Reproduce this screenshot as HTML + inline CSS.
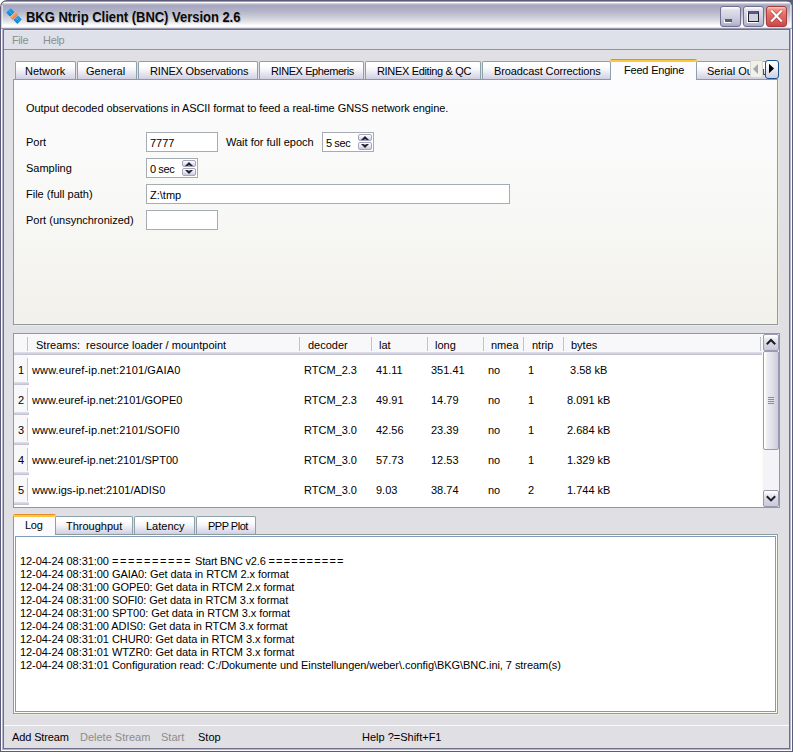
<!DOCTYPE html>
<html><head><meta charset="utf-8">
<style>
*{box-sizing:border-box;margin:0;padding:0}
html,body{width:793px;height:752px;overflow:hidden;background:#fff}
body{position:relative;font-family:"Liberation Sans",sans-serif;font-size:11px;color:#000}
.a{position:absolute}
.t{position:absolute;white-space:pre;line-height:13px;font-size:11px}
/* window frame */
#win{left:0;top:0;width:793px;height:752px;background:#5c5b79;border-radius:7px 7px 0 0}
#title{left:1px;top:1px;width:791px;height:28px;border-radius:6px 6px 0 0;
 background:linear-gradient(#9c9cb4 0,#9c9cb4 1px,#fcfcfd 1px,#fcfcfd 2px,#d2d2de 2px,#d2d2de 3px,#b6b6ca 3px,#b6b6ca 4px,#a6a6c2 4px,#a6a6c2 5px,#b2b2c6 9.5px,#c4c6d2 14.5px,#dcdde3 19.5px,#f0f0f3 22.5px,#fefefe 24px,#fefefe 26px,#e6e5e6 26px,#e6e5e6 27px,#9a9ab0 27px)}
#frL{left:1px;top:29px;width:791px;height:722px;background:#fafafd}
#frR{left:2px;top:29px;width:789px;height:721px;background:#b6b6cc}
#frB{left:3px;top:29px;width:787px;height:720px;background:#6e6d8a}
#frT{left:3px;top:29px;width:787px;height:1px;background:#6e6d8a}
#client{left:4px;top:30px;width:785px;height:718px;background:#e0dfe4}
#menubar{left:4px;top:30px;width:785px;height:19px;background:linear-gradient(#e6e8f0 0,#e6e8f0 1px,#dfe1ea 1px)}
#menuline{left:4px;top:49px;width:785px;height:1px;background:#9393a0}
.menu{color:#8e8e8e}
/* caption buttons */
.cb{position:absolute;top:6px;width:21px;height:21px;border-radius:3px;border:1px solid #6f7192;
 background:linear-gradient(#fdfdff 0,#f6f6fa 1px,#e0e0ea 3px,#d0d0e0 50%,#bdbdd3 85%,#a8a8c4)}
#close{border-color:#a83c3c;background:linear-gradient(#fbe0a8 0,#f4b4a0 1px,#ec8a80 3px,#e36a66 8px,#d85652 80%,#c84848)}
/* tabs */
.tab{position:absolute;top:61px;height:19px;border:1px solid #8ea0aa;border-bottom:none;border-radius:2px 2px 0 0;
 background:linear-gradient(#ffffff 0,#ffffff 4px,#f4f4fa 8px,#e4e4f0 12px,#d4d4e6 16px,#c8c8dc 18px)}
.seltab{position:absolute;background:#fcfcfe}
.seltab:before{content:"";position:absolute;left:-1px;right:-1px;top:0;height:3px;border-radius:2px 2px 0 0;
 background:linear-gradient(#e68b2c 0,#e68b2c 1px,#ffc73c 1px)}
.pane{position:absolute;border:1px solid #919b9c;box-shadow:1px 1px 0 #ecebdf}
#pane1{left:13px;top:79px;width:765px;height:246px;background:linear-gradient(#fcfcfe 0%,#f8f8f6 50%,#f2f1eb 100%)}
.inp{position:absolute;background:#fff;border:1px solid #a5acb2}
.spinbtn{position:absolute;width:14px;height:7px;border:1px solid #a6a6be;border-radius:2px;
 background:linear-gradient(#ffffff,#e4e4ee 60%,#c8c8dc)}
/* table */
#tbl{left:13px;top:333px;width:767px;height:175px;border:1px solid #7f9db9;background:#fff}
.hdr{position:absolute;background:#f8f8fb}
.hsep{position:absolute;width:1px;background:#c2c2d2}
.band{position:absolute;height:3px;background:linear-gradient(#e2e2ec,#d0d0de 50%,#bcbccc)}
.cell{position:absolute;white-space:pre;line-height:13px}
/* log */
#pane2{left:13px;top:534px;width:765px;height:180px;background:#fcfcfe}
#logedit{left:15px;top:536px;width:761px;height:176px;border:1px solid #7f9db9;background:#fff}
.log{position:absolute;left:20px;white-space:pre;line-height:13px;letter-spacing:-0.06px}
#tbsep{left:4px;top:725px;width:785px;height:1px;background:#fafafc}
.dis{color:#8c8c8c}
</style></head>
<body>
<div class="a" style="left:783px;top:0;width:10px;height:10px;background:#5e5d78"></div>
<div id="win" class="a"></div>
<div id="title" class="a"></div>
<div class="a" style="left:1px;top:5px;width:2px;height:23px;background:linear-gradient(90deg,rgba(200,200,220,0.7) 0,rgba(200,200,220,0.7) 1px,rgba(255,255,255,0.55) 1px)"></div>
<div class="a" style="left:790px;top:5px;width:2px;height:23px;background:linear-gradient(90deg,rgba(255,255,255,0.55) 0,rgba(255,255,255,0.55) 1px,rgba(200,200,220,0.7) 1px)"></div>
<div id="frL" class="a"></div>
<div id="frR" class="a"></div>
<div id="frB" class="a"></div>
<div id="frT" class="a"></div>
<div id="client" class="a"></div>
<div id="menubar" class="a"></div>
<div id="menuline" class="a"></div>

<!-- title icon -->
<svg class="a" style="left:4px;top:6px" width="20" height="20" viewBox="4 6 20 20">
 <defs>
  <linearGradient id="gb" x1="0" y1="0" x2="1" y2="1"><stop offset="0" stop-color="#2aa4f0"/><stop offset="1" stop-color="#0b7fd6"/></linearGradient>
  <linearGradient id="go" x1="0" y1="0" x2="1" y2="0"><stop offset="0" stop-color="#fbb070"/><stop offset="1" stop-color="#f07a38"/></linearGradient>
 </defs>
 <g transform="rotate(45 14 16)">
  <rect x="6" y="12.8" width="5.6" height="6.4" rx="0.6" fill="url(#gb)"/>
  <rect x="16.4" y="12.8" width="5.6" height="6.4" rx="0.6" fill="url(#gb)"/>
  <line x1="6.5" y1="16" x2="11.2" y2="16" stroke="#9cc8e0" stroke-width="0.6" stroke-dasharray="1 0.8"/>
  <line x1="16.8" y1="16" x2="21.5" y2="16" stroke="#9cc8e0" stroke-width="0.6" stroke-dasharray="1 0.8"/>
  <rect x="12" y="12.2" width="4" height="7.6" rx="0.4" fill="url(#go)"/>
  <line x1="14" y1="12.3" x2="14" y2="8.6" stroke="#f5a060" stroke-width="0.9"/>
 </g>
</svg>
<div class="t" style="left:26px;top:9px;font-size:14px;font-weight:bold;line-height:16px;transform:scaleX(0.925);transform-origin:0 0;color:#0a0a0a;text-shadow:1px 1px 0 rgba(120,120,140,0.35)">BKG Ntrip Client (BNC) Version 2.6</div>

<div class="cb" style="left:720px"><div class="a" style="left:4px;top:12px;width:7px;height:3px;background:#5c5b79;box-shadow:-1px 1px 0 #fff"></div></div>
<div class="cb" style="left:743px"><div class="a" style="left:4px;top:4px;width:11px;height:11px;border:1px solid #1e1e30;border-top:3px solid #58587e;background:#d0d0e0;box-shadow:-1px 1px 0 #fff"></div></div>
<div class="cb" id="close" style="left:766px">
 <svg class="a" style="left:0;top:0" width="19" height="19" viewBox="0 0 19 19"><path d="M4.2 3.6 L14.8 14.6 M14.8 3.6 L4.2 14.6" stroke="#6a2020" stroke-width="3.4" opacity="0.55"/><path d="M4.2 3.6 L14.8 14.6 M14.8 3.6 L4.2 14.6" stroke="#fff" stroke-width="2.2"/></svg>
</div>

<div class="t menu" style="left:12px;top:34px;letter-spacing:-0.4px">File</div>
<div class="t menu" style="left:43px;top:34px;letter-spacing:-0.3px">Help</div>

<!-- tabs top -->
<div class="tab" style="left:15px;width:61px"></div>
<div class="tab" style="left:77px;width:60px"></div>
<div class="tab" style="left:138px;width:120px"></div>
<div class="tab" style="left:259px;width:105px"></div>
<div class="tab" style="left:365px;width:116px"></div>
<div class="tab" style="left:482px;width:129px"></div>
<div class="tab" style="left:696px;width:80px"></div>
<div id="pane1" class="pane"></div>
<div class="seltab" style="left:611px;top:59px;width:85px;height:21px"></div>
<div class="t" style="left:25px;top:65px">Network</div>
<div class="t" style="left:86px;top:65px">General</div>
<div class="t" style="left:150px;top:65px;letter-spacing:-0.18px">RINEX Observations</div>
<div class="t" style="left:271px;top:65px;letter-spacing:-0.42px">RINEX Ephemeris</div>
<div class="t" style="left:377px;top:65px;letter-spacing:-0.34px">RINEX Editing &amp; QC</div>
<div class="t" style="left:494px;top:65px;letter-spacing:-0.1px">Broadcast Corrections</div>
<div class="t" style="left:624px;top:64px;letter-spacing:-0.2px">Feed Engine</div>
<div class="t" style="left:707px;top:65px">Serial Output</div>

<!-- scroll buttons -->
<div class="a" style="left:750px;top:60px;width:13px;height:18px;border:1px solid #d6d5ce;border-radius:2px;background:#f1f0ea"></div>
<svg class="a" style="left:750px;top:60px" width="13" height="18"><path d="M3 9 L8 4 L8 14 Z" fill="#a7a7a7"/></svg>
<div class="a" style="left:765px;top:60px;width:14px;height:19px;border:1px solid #1a5290;border-radius:3px;background:linear-gradient(#fff,#f2f2f8 40%,#cdcde0)"></div>
<svg class="a" style="left:765px;top:60px" width="14" height="19"><path d="M4 3.8 L9 8.5 L4 13.2 Z" fill="#000"/></svg>

<!-- form -->
<div class="t" style="left:26px;top:102px;letter-spacing:-0.06px">Output decoded observations in ASCII format to feed a real-time GNSS network engine.</div>
<div class="t" style="left:26px;top:136px">Port</div>
<div class="t" style="left:26px;top:162px">Sampling</div>
<div class="t" style="left:26px;top:188px">File (full path)</div>
<div class="t" style="left:26px;top:214px">Port (unsynchronized)</div>
<div class="inp" style="left:146px;top:132px;width:72px;height:20px"></div>
<div class="t" style="left:150px;top:137px">7777</div>
<div class="t" style="left:226px;top:136px">Wait for full epoch</div>
<div class="inp" style="left:322px;top:132px;width:52px;height:20px"></div>
<div class="t" style="left:326px;top:137px;letter-spacing:-0.4px">5 sec</div>
<div class="spinbtn" style="left:358px;top:134px"></div>
<div class="spinbtn" style="left:358px;top:142px;height:8px"></div>
<svg class="a" style="left:358px;top:134px" width="14" height="16"><path d="M3 6 L7 2 L11 6 L8.8 6 L7 5.2 L5.2 6 Z" fill="#202028"/><path d="M3 10 L7 14 L11 10 L8.8 10 L7 10.8 L5.2 10 Z" fill="#202028"/></svg>
<div class="inp" style="left:146px;top:158px;width:52px;height:20px"></div>
<div class="t" style="left:150px;top:163px;letter-spacing:-0.4px">0 sec</div>
<div class="spinbtn" style="left:182px;top:160px"></div>
<div class="spinbtn" style="left:182px;top:168px;height:8px"></div>
<svg class="a" style="left:182px;top:160px" width="14" height="16"><path d="M3 6 L7 2 L11 6 L8.8 6 L7 5.2 L5.2 6 Z" fill="#202028"/><path d="M3 10 L7 14 L11 10 L8.8 10 L7 10.8 L5.2 10 Z" fill="#202028"/></svg>
<div class="inp" style="left:146px;top:184px;width:364px;height:20px"></div>
<div class="t" style="left:150px;top:189px">Z:\tmp</div>
<div class="inp" style="left:146px;top:210px;width:72px;height:20px"></div>

<!-- table -->
<div id="tbl" class="a"></div>
<!-- table content -->
<div class="hdr" style="left:14px;top:334px;width:748px;height:18px"></div>
<div class="band" style="left:14px;top:352px;width:748px"></div>
<div class="hsep" style="left:27px;top:337px;height:14px"></div>
<div class="hsep" style="left:299px;top:337px;height:14px"></div>
<div class="hsep" style="left:371px;top:337px;height:14px"></div>
<div class="hsep" style="left:427px;top:337px;height:14px"></div>
<div class="hsep" style="left:483px;top:337px;height:14px"></div>
<div class="hsep" style="left:523px;top:337px;height:14px"></div>
<div class="hsep" style="left:563px;top:337px;height:14px"></div>
<div class="hsep" style="left:760px;top:337px;height:14px"></div>
<div class="cell" style="left:36px;top:339px">Streams:  resource loader / mountpoint</div>
<div class="cell" style="left:308px;top:339px">decoder</div>
<div class="cell" style="left:379px;top:339px">lat</div>
<div class="cell" style="left:435px;top:339px">long</div>
<div class="cell" style="left:491px;top:339px">nmea</div>
<div class="cell" style="left:532px;top:339px">ntrip</div>
<div class="cell" style="left:571px;top:339px">bytes</div>
<div class="hdr" style="left:14px;top:355px;width:14px;height:27px"></div>
<div class="band" style="left:14px;top:382px;width:15px"></div>
<div class="hsep" style="left:27px;top:358px;height:23px"></div>
<div class="cell" style="left:18px;top:364px">1</div>
<div class="cell" style="left:32px;top:364px;letter-spacing:0.13px">www.euref-ip.net:2101/GAIA0</div>
<div class="cell" style="left:304px;top:364px">RTCM_2.3</div>
<div class="cell" style="left:376px;top:364px">41.11</div>
<div class="cell" style="left:431px;top:364px">351.41</div>
<div class="cell" style="left:488px;top:364px">no</div>
<div class="cell" style="left:528px;top:364px">1</div>
<div class="cell" style="left:567px;top:364px"> 3.58 kB</div>
<div class="hdr" style="left:14px;top:385px;width:14px;height:27px"></div>
<div class="band" style="left:14px;top:412px;width:15px"></div>
<div class="hsep" style="left:27px;top:388px;height:23px"></div>
<div class="cell" style="left:18px;top:394px">2</div>
<div class="cell" style="left:32px;top:394px">www.euref-ip.net:2101/GOPE0</div>
<div class="cell" style="left:304px;top:394px">RTCM_2.3</div>
<div class="cell" style="left:376px;top:394px">49.91</div>
<div class="cell" style="left:431px;top:394px">14.79</div>
<div class="cell" style="left:488px;top:394px">no</div>
<div class="cell" style="left:528px;top:394px">1</div>
<div class="cell" style="left:567px;top:394px">8.091 kB</div>
<div class="hdr" style="left:14px;top:415px;width:14px;height:27px"></div>
<div class="band" style="left:14px;top:442px;width:15px"></div>
<div class="hsep" style="left:27px;top:418px;height:23px"></div>
<div class="cell" style="left:18px;top:424px">3</div>
<div class="cell" style="left:32px;top:424px;letter-spacing:0.13px">www.euref-ip.net:2101/SOFI0</div>
<div class="cell" style="left:304px;top:424px">RTCM_3.0</div>
<div class="cell" style="left:376px;top:424px">42.56</div>
<div class="cell" style="left:431px;top:424px">23.39</div>
<div class="cell" style="left:488px;top:424px">no</div>
<div class="cell" style="left:528px;top:424px">1</div>
<div class="cell" style="left:567px;top:424px">2.684 kB</div>
<div class="hdr" style="left:14px;top:445px;width:14px;height:27px"></div>
<div class="band" style="left:14px;top:472px;width:15px"></div>
<div class="hsep" style="left:27px;top:448px;height:23px"></div>
<div class="cell" style="left:18px;top:454px">4</div>
<div class="cell" style="left:32px;top:454px">www.euref-ip.net:2101/SPT00</div>
<div class="cell" style="left:304px;top:454px">RTCM_3.0</div>
<div class="cell" style="left:376px;top:454px">57.73</div>
<div class="cell" style="left:431px;top:454px">12.53</div>
<div class="cell" style="left:488px;top:454px">no</div>
<div class="cell" style="left:528px;top:454px">1</div>
<div class="cell" style="left:567px;top:454px">1.329 kB</div>
<div class="hdr" style="left:14px;top:475px;width:14px;height:27px"></div>
<div class="band" style="left:14px;top:502px;width:15px"></div>
<div class="hsep" style="left:27px;top:478px;height:23px"></div>
<div class="cell" style="left:18px;top:484px">5</div>
<div class="cell" style="left:32px;top:484px">www.igs-ip.net:2101/ADIS0</div>
<div class="cell" style="left:304px;top:484px">RTCM_3.0</div>
<div class="cell" style="left:376px;top:484px">9.03</div>
<div class="cell" style="left:431px;top:484px">38.74</div>
<div class="cell" style="left:488px;top:484px">no</div>
<div class="cell" style="left:528px;top:484px">2</div>
<div class="cell" style="left:567px;top:484px">1.744 kB</div>

<!-- scrollbar -->
<div class="a" style="left:762px;top:334px;width:17px;height:173px;background:#f3f3f8"></div>
<div class="a" style="left:762px;top:334px;width:1px;height:173px;background:#fbfbf6"></div>
<div class="a" style="left:763px;top:334px;width:16px;height:17px;border:1px solid #9a9ab2;border-radius:2px;background:linear-gradient(#ffffff 0,#ffffff 1px,#eeeef4 3px,#d6d6e2 9px,#c9cad9 15px)"></div>
<svg class="a" style="left:763px;top:334px" width="16" height="17"><path d="M3.8 10.2 L8 6 L12.2 10.2" fill="none" stroke="#1c1c28" stroke-width="2"/></svg>
<div class="a" style="left:763px;top:351px;width:16px;height:99px;border:1px solid #9a9ab2;border-radius:2px;background:linear-gradient(90deg,#ffffff 0,#ffffff 1px,#ececf2 3px,#dedee8 9px,#cbcbdb 14px)"></div>
<div class="a" style="left:768px;top:397px;width:6px;height:1px;background:#8a8aa0;box-shadow:0 2px 0 #8a8aa0,0 4px 0 #8a8aa0,0 6px 0 #8a8aa0"></div>
<div class="a" style="left:763px;top:490px;width:16px;height:17px;border:1px solid #9a9ab2;border-radius:2px;background:linear-gradient(#ffffff 0,#ffffff 1px,#eeeef4 3px,#d6d6e2 9px,#c9cad9 15px)"></div>
<svg class="a" style="left:763px;top:490px" width="16" height="17"><path d="M3.8 6.2 L8 10.4 L12.2 6.2" fill="none" stroke="#1c1c28" stroke-width="2"/></svg>
<!-- log tabs -->
<div class="tab" style="left:55px;top:516px;width:78px;height:19px"></div>
<div class="tab" style="left:134px;top:516px;width:61px;height:19px"></div>
<div class="tab" style="left:196px;top:516px;width:60px;height:19px"></div>
<div id="pane2" class="pane"></div>
<div class="seltab" style="left:14px;top:514px;width:41px;height:21px"></div>
<div class="a" style="left:13px;top:516px;width:1px;height:19px;background:#919b9c"></div>
<div id="logedit" class="a"></div>
<!-- log -->
<div class="log" style="top:555px">12-04-24 08:31:00 <span style="letter-spacing:1.6px">==========</span><span style="letter-spacing:-0.2px"> Start BNC v2.6 </span><span style="letter-spacing:1.2px">==========</span></div>
<div class="log" style="top:568px">12-04-24 08:31:00 GAIA0: Get data in RTCM 2.x format</div>
<div class="log" style="top:581px">12-04-24 08:31:00 GOPE0: Get data in RTCM 2.x format</div>
<div class="log" style="top:594px">12-04-24 08:31:00 SOFI0: Get data in RTCM 3.x format</div>
<div class="log" style="top:607px">12-04-24 08:31:00 SPT00: Get data in RTCM 3.x format</div>
<div class="log" style="top:620px">12-04-24 08:31:00 ADIS0: Get data in RTCM 3.x format</div>
<div class="log" style="top:633px">12-04-24 08:31:01 CHUR0: Get data in RTCM 3.x format</div>
<div class="log" style="top:646px">12-04-24 08:31:01 WTZR0: Get data in RTCM 3.x format</div>
<div class="log" style="top:659px">12-04-24 08:31:01 Configuration read: C:/Dokumente und Einstellungen/weber\.config\BKG\BNC.ini, 7 stream(s)</div>
<div class="t" style="left:25px;top:519px;letter-spacing:-0.3px">Log</div>
<div class="t" style="left:66px;top:520px">Throughput</div>
<div class="t" style="left:146px;top:520px">Latency</div>
<div class="t" style="left:208px;top:520px;letter-spacing:-0.5px">PPP Plot</div>

<div id="tbsep" class="a"></div>
<div class="t" style="left:12px;top:731px;letter-spacing:-0.12px">Add Stream</div>
<div class="t dis" style="left:80px;top:731px">Delete Stream</div>
<div class="t dis" style="left:161px;top:731px">Start</div>
<div class="t" style="left:198px;top:731px">Stop</div>
<div class="t" style="left:362px;top:731px">Help ?=Shift+F1</div>
</body></html>
